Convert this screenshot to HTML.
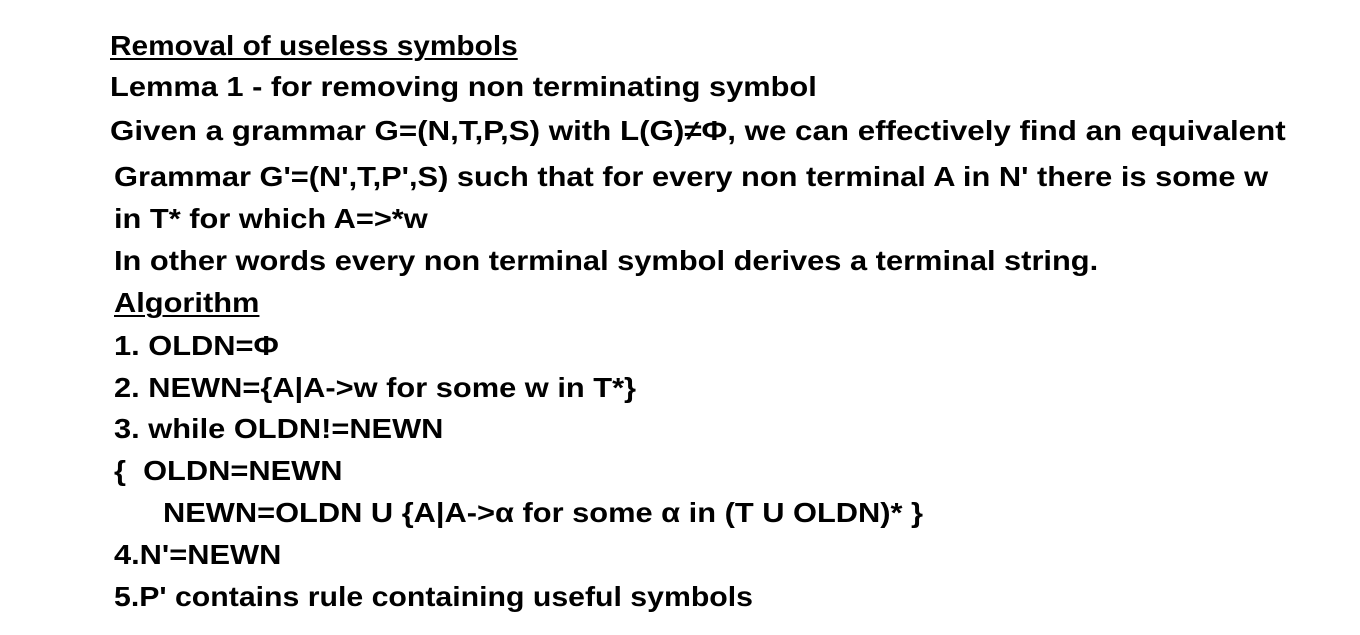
<!DOCTYPE html>
<html><head><meta charset="utf-8"><style>
body{margin:0;width:1360px;height:635px;background:#fff;overflow:hidden;position:relative;font-family:"Liberation Sans",sans-serif;font-weight:bold;color:#000}
.l{position:absolute;font-size:28px;line-height:34px;white-space:nowrap;transform-origin:0 50%;transform:scaleX(1.1)}
u{text-decoration-thickness:2px;text-underline-offset:3px}
</style></head><body>
<div class="l" style="left:110px;top:29px;transform:scaleX(1.065)"><u>Removal of useless symbols</u></div>
<div class="l" style="left:110px;top:70px">Lemma 1 - for removing non terminating symbol</div>
<div class="l" style="left:110px;top:114px;transform:scaleX(1.118)">Given a grammar G=(N,T,P,S) with L(G)≠Φ, we can effectively find an equivalent</div>
<div class="l" style="left:114px;top:160px">Grammar G'=(N',T,P',S) such that for every non terminal A in N' there is some w</div>
<div class="l" style="left:114px;top:202px">in T* for which A=&gt;*w</div>
<div class="l" style="left:114px;top:244px">In other words every non terminal symbol derives a terminal string.</div>
<div class="l" style="left:114px;top:286px"><u>Algorithm</u></div>
<div class="l" style="left:114px;top:329px">1. OLDN=Φ</div>
<div class="l" style="left:114px;top:371px">2. NEWN={A|A-&gt;w for some w in T*}</div>
<div class="l" style="left:114px;top:412px">3. while OLDN!=NEWN</div>
<div class="l" style="left:114px;top:454px">{&nbsp; OLDN=NEWN</div>
<div class="l" style="left:163px;top:496px">NEWN=OLDN U {A|A-&gt;α for some α in (T U OLDN)* }</div>
<div class="l" style="left:114px;top:538px">4.N'=NEWN</div>
<div class="l" style="left:114px;top:580px;transform:scaleX(1.08)">5.P' contains rule containing useful symbols</div>
</body></html>
